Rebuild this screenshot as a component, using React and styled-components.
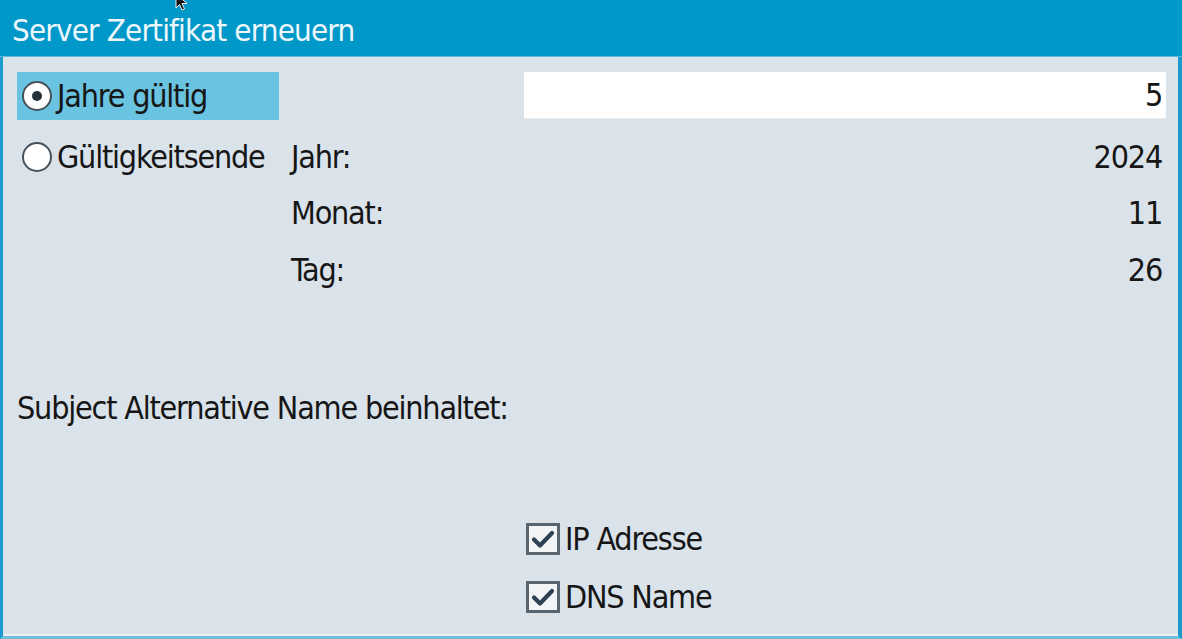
import styled, { createGlobalStyle } from "styled-components"
import { Fragment } from "react"

const GlobalStyle = createGlobalStyle`
  html, body {
    margin: 0;
    padding: 0;
    background: #dae2ea;
  }
  body {
    font-family: "DejaVu Sans Condensed", "DejaVu Sans", sans-serif;
    font-stretch: condensed;
  }
`

const Window = styled.div`
  position: relative;
  width: 1182px;
  height: 639px;
  display: flex;
  flex-direction: column;
  overflow: hidden;
`

const TitleBar = styled.div`
  height: 57px;
  flex: none;
  background: #0098c9;
  color: #eef7fb;
  font-size: 31px;
  letter-spacing: -0.8px;
  display: flex;
  align-items: center;
  padding-left: 12px;
  padding-top: 2px;
  box-sizing: border-box;
  box-shadow: inset 0 -1px 0 #5fb9da;
`

const Body = styled.div`
  flex: 1;
  background: #dae2ea;
  border-left: 3px solid #1a9bcb;
  border-right: 4px solid #1a9bcb;
  border-bottom: 3px solid #6dbfdc;
  box-shadow: inset 0 -2px 0 #eceef1;
  padding: 15px 12px 0 14px;
  color: #161616;
  font-size: 32px;
  letter-spacing: -1.2px;
`

const Form = styled.div`
  display: grid;
  grid-template-columns: 274px 233px 1fr;
  grid-template-rows: 48px 65px 56px 57px;
  align-items: end;
`

const Cell = styled.div`
  height: 56px;
  display: flex;
  align-items: center;
  justify-content: ${p => (p.$right ? "flex-end" : "flex-start")};
  padding-right: ${p => (p.$right ? "4px" : "0")};
`

const RadioRow = styled.div`
  height: ${p => (p.$active ? "48px" : "56px")};
  width: 262px;
  align-self: ${p => (p.$active ? "start" : "end")};
  display: flex;
  align-items: center;
  gap: 5px;
  padding-left: 5px;
  box-sizing: border-box;
  white-space: nowrap;
  background: ${p => (p.$active ? "#6ac3e0" : "transparent")};
`

const RadioCircle = styled.span`
  width: 30px;
  height: 30px;
  border-radius: 50%;
  border: 2px solid #46525c;
  background: #ffffff;
  box-sizing: border-box;
  display: flex;
  align-items: center;
  justify-content: center;
  flex: none;

  &::after {
    content: "";
    width: 10px;
    height: 10px;
    border-radius: 50%;
    background: ${p => (p.$checked ? "#25313a" : "transparent")};
  }
`

const ValueBox = styled.div`
  align-self: start;
  height: 46px;
  background: #ffffff;
  display: flex;
  align-items: center;
  justify-content: flex-end;
  padding-right: 4px;
  box-shadow: 0 1px 0 #e8ecf0;
`

const SectionLabel = styled.div`
  margin-top: 90px;
  height: 40px;
  display: flex;
  align-items: center;
`

const CheckList = styled.div`
  margin-top: 90px;
  margin-left: 509px;
  display: flex;
  flex-direction: column;
  gap: 16px;
`

const CheckRow = styled.div`
  height: 42px;
  display: flex;
  align-items: center;
  gap: 5px;
`

const CheckBox = styled.span`
  width: 34px;
  height: 32px;
  border: 3px solid #58656f;
  background: #f2f4f6;
  box-sizing: border-box;
  display: flex;
  align-items: center;
  justify-content: center;
  flex: none;
`

const Cursor = styled.svg`
  position: absolute;
  left: 174px;
  top: -6px;
`

function Radio({ checked, children }) {
  return (
    <RadioRow $active={checked}>
      <RadioCircle $checked={checked} />
      {children}
    </RadioRow>
  )
}

function Check({ children }) {
  return (
    <CheckRow>
      <CheckBox>
        <svg width="26" height="22" viewBox="0 0 26 22">
          <path d="M4 11.5 L10 17.5 L22 5" fill="none" stroke="#2e4254" strokeWidth="4.2" strokeLinecap="round" strokeLinejoin="round" />
        </svg>
      </CheckBox>
      {children}
    </CheckRow>
  )
}

export default function App() {
  const dateFields = [
    ["Monat:", "11"],
    ["Tag:", "26"],
  ]

  return (
    <>
      <GlobalStyle />
      <Window>
        <TitleBar>Server Zertifikat erneuern</TitleBar>
        <Body>
          <Form>
            <Radio checked>Jahre gültig</Radio>
            <div />
            <ValueBox>5</ValueBox>

            <Radio>Gültigkeitsende</Radio>
            <Cell>Jahr:</Cell>
            <Cell $right>2024</Cell>

            {dateFields.map(([label, value]) => (
              <Fragment key={label}>
                <div />
                <Cell>{label}</Cell>
                <Cell $right>{value}</Cell>
              </Fragment>
            ))}
          </Form>

          <SectionLabel>Subject Alternative Name beinhaltet:</SectionLabel>

          <CheckList>
            <Check>IP Adresse</Check>
            <Check>DNS Name</Check>
          </CheckList>
        </Body>
        <Cursor width="16" height="18" viewBox="0 0 16 18">
          <path d="M2 0 L2 14 L5.5 10.5 L8 16 L10.5 15 L8 9.5 L13 9.5 Z" fill="#111" stroke="#eee" strokeWidth="1" />
        </Cursor>
      </Window>
    </>
  )
}
